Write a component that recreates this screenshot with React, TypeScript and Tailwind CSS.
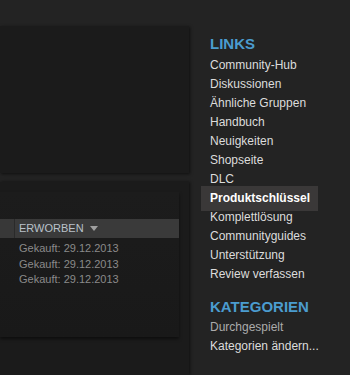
const links = [
  "Community-Hub",
  "Diskussionen",
  "Ähnliche Gruppen",
  "Handbuch",
  "Neuigkeiten",
  "Shopseite",
  "DLC",
  "Produktschlüssel",
  "Komplettlösung",
  "Communityguides",
  "Unterstützung",
  "Review verfassen",
];

const purchases = ["29.12.2013", "29.12.2013", "29.12.2013"];

const SideLink = ({ label }: { label: string }) => {
  if (label === "Produktschlüssel") {
    return (
      <div className="-my-[3px] w-[117px] bg-[#3a3838] py-[3px] pl-[9px] font-bold leading-[19px] text-white">
        {label}
      </div>
    );
  }
  return <div className="pl-[9px] leading-[19px] text-[#dcdcdc]">{label}</div>;
};

const App = () => {
  return (
    <div
      className="flex h-[375px] w-[350px] overflow-hidden bg-[#232323] text-[12px]"
      style={{ fontFamily: '"Liberation Sans", Arial, sans-serif' }}
    >
      {/* left column */}
      <div className="flex w-[189px] shrink-0 flex-col gap-[9px] pt-[26px]">
        <div className="h-[147px] bg-[#1b1b1b] shadow-[1px_1px_3px_rgba(0,0,0,0.6)]" />

        <div className="flex-1 bg-[#1b1b1b] pt-[10px] shadow-[1px_0_3px_rgba(0,0,0,0.6)]">
          <div className="h-[145px] w-[179px] bg-gradient-to-b from-[#1c1c1c] to-[#191919] pt-[27px] shadow-[0_2px_3px_rgba(0,0,0,0.5)]">
            <div className="flex h-[19px] items-center bg-[#3a3a3a]">
              <div className="h-full w-[15px] border-r border-[#2a2a2a] bg-[#383838]" />
              <div className="flex items-center pl-[4px] text-[11px] text-[#b9c2ca]">
                ERWORBEN
                <svg width="8" height="5" viewBox="0 0 8 5" className="ml-[6px]">
                  <path d="M0 0h8L4 5z" fill="#a0a0a0" />
                </svg>
              </div>
            </div>
            <div className="pt-[3px] pl-[19px] text-[11px] leading-[15.5px] text-[#8a8a8a]">
              {purchases.map((d, i) => (
                <div key={i}>Gekauft: {d}</div>
              ))}
            </div>
          </div>
        </div>
      </div>

      {/* sidebar */}
      <div className="ml-[12px] flex flex-col pt-[34px]">
        <div className="mb-[2px] pl-[9px] text-[15px] leading-[20px] font-bold text-[#4b9ccf]">LINKS</div>
        {links.map((l) => (
          <SideLink key={l} label={l} />
        ))}

        <div className="mt-[13px] mb-[1px] pl-[9px] text-[15px] leading-[20px] font-bold text-[#4b9ccf]">
          KATEGORIEN
        </div>
        <div className="pl-[9px] leading-[19px] text-[#ababab]">Durchgespielt</div>
        <div className="pl-[9px] leading-[19px] text-[#dcdcdc]">Kategorien ändern...</div>
      </div>
    </div>
  );
};

export default App;
